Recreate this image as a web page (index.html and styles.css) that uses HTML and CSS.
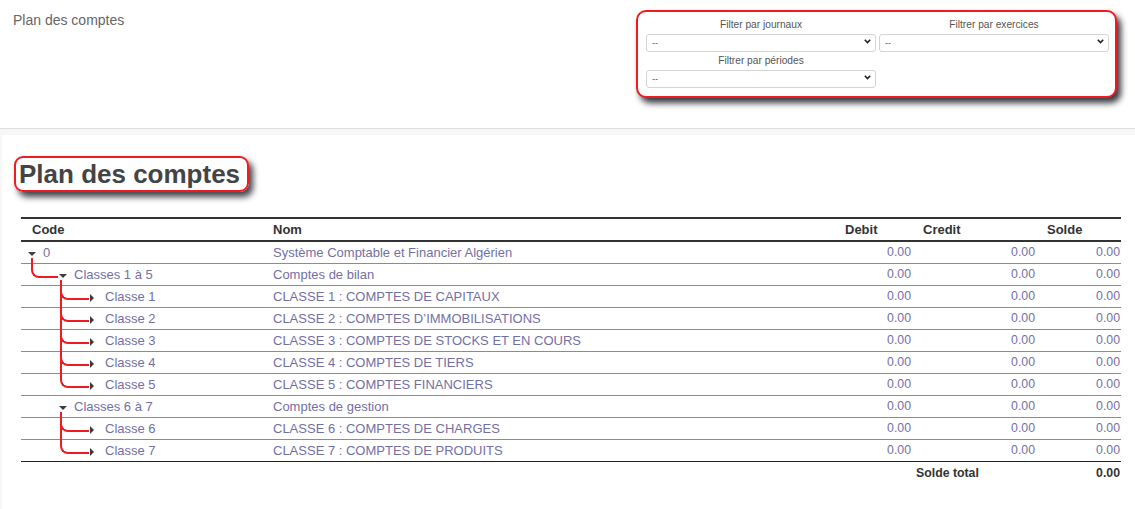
FILE: index.html
```html
<!DOCTYPE html>
<html lang="fr">
<head>
<meta charset="utf-8">
<title>Plan des comptes</title>
<link rel="stylesheet" href="styles.css">
</head>
<body>
<header class="topbar">
  <div class="page-name">Plan des comptes</div>
  <div class="filters">
    <div class="filter">
      <label class="filter-label">Filter par journaux</label>
      <div class="select-wrap">
        <select class="select"><option>--</option></select>
        <svg class="chev" width="7" height="5" viewBox="0 0 7 5"><path d="M0.8 0.8 L3.5 3.6 L6.2 0.8" fill="none" stroke="#222" stroke-width="1.6"/></svg>
      </div>
    </div>
    <div class="filter">
      <label class="filter-label">Filtrer par exercices</label>
      <div class="select-wrap">
        <select class="select"><option>--</option></select>
        <svg class="chev" width="7" height="5" viewBox="0 0 7 5"><path d="M0.8 0.8 L3.5 3.6 L6.2 0.8" fill="none" stroke="#222" stroke-width="1.6"/></svg>
      </div>
    </div>
    <div class="filter">
      <label class="filter-label">Filtrer par périodes</label>
      <div class="select-wrap">
        <select class="select"><option>--</option></select>
        <svg class="chev" width="7" height="5" viewBox="0 0 7 5"><path d="M0.8 0.8 L3.5 3.6 L6.2 0.8" fill="none" stroke="#222" stroke-width="1.6"/></svg>
      </div>
    </div>
  </div>
</header>
<main class="main">
  <section class="panel">
    <h1 class="title">Plan des comptes</h1>
    <table class="accounts">
      <colgroup>
        <col class="c-code"><col class="c-nom"><col class="c-debit"><col class="c-credit"><col class="c-solde">
      </colgroup>
      <thead>
        <tr><th>Code</th><th>Nom</th><th>Debit</th><th>Credit</th><th>Solde</th></tr>
      </thead>
      <tbody>
        <tr><td class="code lv0"><span class="caret down"></span>0</td><td class="nom">Système Comptable et Financier Algérien</td><td class="num">0.00</td><td class="num">0.00</td><td class="num">0.00</td></tr>
        <tr><td class="code lv1 conn first"><span class="caret down"></span>Classes 1 à 5</td><td class="nom">Comptes de bilan</td><td class="num">0.00</td><td class="num">0.00</td><td class="num">0.00</td></tr>
        <tr><td class="code lv2 conn first"><span class="caret right"></span>Classe 1</td><td class="nom">CLASSE 1 : COMPTES DE CAPITAUX</td><td class="num">0.00</td><td class="num">0.00</td><td class="num">0.00</td></tr>
        <tr><td class="code lv2 conn"><span class="caret right"></span>Classe 2</td><td class="nom">CLASSE 2 : COMPTES D’IMMOBILISATIONS</td><td class="num">0.00</td><td class="num">0.00</td><td class="num">0.00</td></tr>
        <tr><td class="code lv2 conn"><span class="caret right"></span>Classe 3</td><td class="nom">CLASSE 3 : COMPTES DE STOCKS ET EN COURS</td><td class="num">0.00</td><td class="num">0.00</td><td class="num">0.00</td></tr>
        <tr><td class="code lv2 conn"><span class="caret right"></span>Classe 4</td><td class="nom">CLASSE 4 : COMPTES DE TIERS</td><td class="num">0.00</td><td class="num">0.00</td><td class="num">0.00</td></tr>
        <tr><td class="code lv2 conn"><span class="caret right"></span>Classe 5</td><td class="nom">CLASSE 5 : COMPTES FINANCIERS</td><td class="num">0.00</td><td class="num">0.00</td><td class="num">0.00</td></tr>
        <tr><td class="code lv1"><span class="caret down"></span>Classes 6 à 7</td><td class="nom">Comptes de gestion</td><td class="num">0.00</td><td class="num">0.00</td><td class="num">0.00</td></tr>
        <tr><td class="code lv2 conn first"><span class="caret right"></span>Classe 6</td><td class="nom">CLASSE 6 : COMPTES DE CHARGES</td><td class="num">0.00</td><td class="num">0.00</td><td class="num">0.00</td></tr>
        <tr class="last"><td class="code lv2 conn"><span class="caret right"></span>Classe 7</td><td class="nom">CLASSE 7 : COMPTES DE PRODUITS</td><td class="num">0.00</td><td class="num">0.00</td><td class="num">0.00</td></tr>
      </tbody>
      <tfoot>
        <tr><td></td><td></td><td></td><td class="total-label">Solde total</td><td class="total-value">0.00</td></tr>
      </tfoot>
    </table>
  </section>
</main>
</body>
</html>
```

FILE: styles.css
```css
* { box-sizing: border-box; }
html, body { margin: 0; padding: 0; }
body {
  font-family: "Liberation Sans", Arial, sans-serif;
  background: #f7f7f7;
  color: #333;
  width: 1135px;
  height: 509px;
  overflow: hidden;
}

.topbar {
  height: 129px;
  background: #fff;
  border-bottom: 1px solid #dedede;
  display: flex;
  justify-content: space-between;
  align-items: flex-start;
  padding: 10px 18px 0 13px;
}
.page-name {
  margin-top: 2px;
  font-size: 14px;
  line-height: 16px;
  color: #666;
}

.filters {
  width: 481px;
  border: 2px solid #ee1b22;
  border-radius: 10px;
  box-shadow: 4px 5px 6px rgba(20, 20, 30, 0.85);
  background: #fff;
  padding: 6px 6px 10px 8px;
  display: grid;
  grid-template-columns: 230px 230px;
  column-gap: 3px;
  row-gap: 4px;
}
.filter { display: flex; flex-direction: column; }
.filter-label {
  display: block;
  text-align: center;
  font-size: 10.2px;
  line-height: 14px;
  color: #555;
}
.select-wrap { position: relative; height: 18px; }
.select {
  appearance: none;
  -webkit-appearance: none;
  width: 100%;
  height: 18px;
  border: 1px solid #d4d4d4;
  border-radius: 3px;
  background: #fff;
  font-family: "Liberation Sans", Arial, sans-serif;
  font-size: 9px;
  color: #555;
  padding: 0 0 0 5px;
  margin: 0;
  outline: none;
}
.chev {
  position: absolute;
  right: 5px;
  top: 7px;
  pointer-events: none;
}

.main {
  padding: 6px 0 0 2px;
}
.panel {
  background: #fff;
  height: 374px;
  padding: 21px 0 0 12px;
}
.title {
  display: inline-block;
  margin: 0;
  font-size: 26px;
  line-height: 32px;
  font-weight: bold;
  color: #444;
  border: 2px solid #ee1b22;
  border-radius: 9px;
  padding: 0 7px 0 3px;
  box-shadow: 4px 5px 6px rgba(20, 20, 30, 0.8);
}

.accounts {
  margin: 25px 0 0 7px;
  width: 1100px;
  table-layout: fixed;
  border-collapse: separate;
  border-spacing: 0;
  font-size: 13px;
}
.c-code { width: 241px; }
.c-nom { width: 572px; }
.c-debit { width: 78px; }
.c-credit { width: 124px; }
.c-solde { width: 85px; }

.accounts th {
  text-align: left;
  font-weight: bold;
  color: #333;
  height: 25px;
  padding: 0 0 0 11px;
  border-top: 2px solid #333;
  border-bottom: 2px solid #333;
  line-height: 21px;
}
.accounts td {
  height: 22px;
  padding: 0;
  line-height: 21px;
  border-bottom: 1px solid #8c8c8c;
  color: #726fa6;
  white-space: nowrap;
}
.accounts tr.last td { border-bottom: 1px solid #222; }
.accounts td.nom { padding-left: 11px; }
.accounts td.num { text-align: right; padding-right: 1px; font-size: 12.3px; }

.code { position: relative; }
.code.lv0 { padding-left: 7px; }
.code.lv1 { padding-left: 38px; }
.code.lv2 { padding-left: 69px; }

.caret {
  display: inline-block;
  width: 8px;
  margin-right: 7px;
  height: 7px;
  vertical-align: 0;
  position: relative;
}
.caret::after {
  content: "";
  position: absolute;
  left: 0;
  width: 0;
  height: 0;
}
.caret.down::after {
  top: 2px;
  border-left: 4px solid transparent;
  border-right: 4px solid transparent;
  border-top: 4px solid #3c3c3c;
}
.caret.right::after {
  top: 0;
  border-top: 4px solid transparent;
  border-bottom: 4px solid transparent;
  border-left: 4px solid #3c3c3c;
}

.conn::before {
  content: "";
  position: absolute;
  border-left: 2px solid #ee1b22;
  border-bottom: 2px solid #ee1b22;
  border-bottom-left-radius: 8px;
  pointer-events: none;
}
.lv1.conn::before { left: 10px; width: 25px; top: -22px; height: 34px; }
.lv2.conn::before { left: 39px; width: 27px; top: -22px; height: 34px; }
.conn.first::before { top: -6px; height: 18px; }

.accounts tfoot td {
  border-bottom: none;
  color: #333;
  font-weight: bold;
  font-size: 12.3px;
}
.accounts td.total-label { padding-left: 4px; }
.accounts td.total-value { text-align: right; padding-right: 1px; }
```
